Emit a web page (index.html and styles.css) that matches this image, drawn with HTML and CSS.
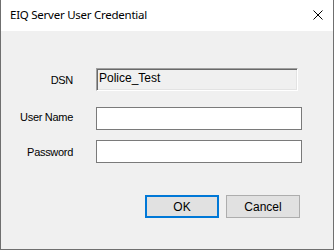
FILE: index.html
```html
<!DOCTYPE html>
<html>
<head>
<meta charset="utf-8">
<link rel="stylesheet" href="styles.css">
</head>
<body>
<div class="window">
  <div class="titlebar">
    <span class="title">EIQ Server User Credential</span>
    <svg class="close" width="10" height="10" viewBox="0 0 10 10">
      <path d="M0.5 0.5 L9.5 9.5 M9.5 0.5 L0.5 9.5" stroke="#000" stroke-width="1" fill="none"/>
    </svg>
  </div>
  <div class="content">
    <div class="form">
      <div class="label">DSN</div>
      <div class="field disabled">Police_Test</div>
      <div class="label">User Name</div>
      <div class="field"></div>
      <div class="label">Password</div>
      <div class="field"></div>
    </div>
    <div class="buttons">
      <div class="btn default">OK</div>
      <div class="btn">Cancel</div>
    </div>
  </div>
</div>
</body>
</html>
```
FILE: styles.css
```css
html, body {
  margin: 0;
  padding: 0;
  background: #f0f0f0;
}
.window {
  width: 334px;
  height: 250px;
  box-sizing: border-box;
  border-left: 1px solid #6f6f6f;
  border-right: 1px solid #6f6f6f;
  border-bottom: 1px solid #6f6f6f;
  display: flex;
  flex-direction: column;
  background: #f0f0f0;
}
.titlebar {
  height: 31px;
  background: #fff;
  display: flex;
  align-items: center;
  justify-content: space-between;
  padding: 0 10px 0 9px;
  flex: none;
}
.title {
  font-family: "Noto Sans", sans-serif;
  font-size: 11.5px;
  letter-spacing: -0.25px;
  color: #000;
  line-height: 16px;
  margin-top: -1px;
}
.close {
  display: block;
  margin-top: -1px;
}
.content {
  flex: 1;
  padding-top: 37px;
  font-family: "Liberation Sans", Arial, sans-serif;
  font-size: 11px;
  color: #000;
}
.form {
  display: grid;
  grid-template-columns: 72px 206px;
  grid-template-rows: 23px 23px 23px;
  column-gap: 23px;
  row-gap: 13px;
}
.label {
  text-align: right;
  align-self: center;
  line-height: 13px;
  padding-top: 1px;
  letter-spacing: -0.3px;
}
.field {
  box-sizing: border-box;
  height: 23px;
  background: #fff;
  border: 1px solid #7a7a7a;
}
.field.disabled {
  width: 202px;
  background: #f0f0f0;
  border-top: 1px solid #a0a0a0;
  border-left: 1px solid #a0a0a0;
  border-bottom: 1px solid #fff;
  border-right: 1px solid #fff;
  box-shadow: inset 1px 1px 0 #696969, inset -1px -1px 0 #e3e3e3;
  padding: 2px 0 0 2px;
  line-height: 14px;
  font-size: 12px;
}
.form > :nth-child(3), .form > :nth-child(4) {
  margin-top: 3px;
}
.buttons {
  display: flex;
  gap: 7px;
  padding-left: 144px;
  margin-top: 32px;
}
.btn {
  box-sizing: border-box;
  width: 74px;
  height: 23px;
  background: #e1e1e1;
  border: 1px solid #adadad;
  display: flex;
  align-items: center;
  justify-content: center;
  font-size: 12px;
  line-height: 14px;
}
.btn.default {
  border: 2px solid #0078d7;
}
```
